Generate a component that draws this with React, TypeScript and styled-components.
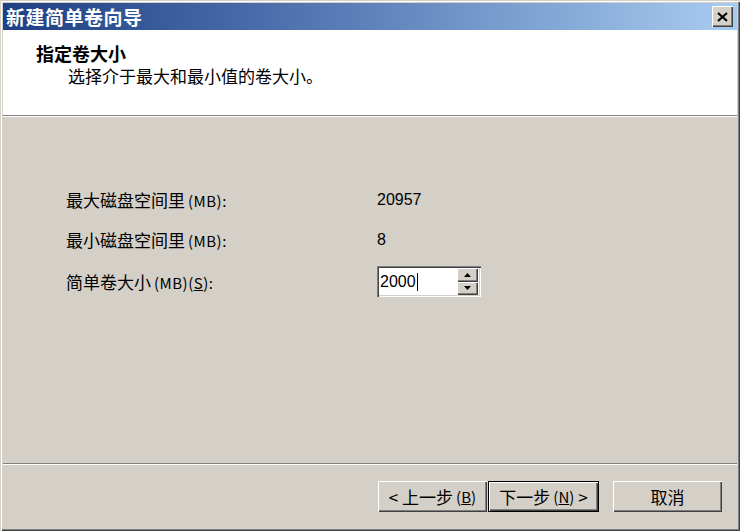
import React from "react";
import styled, { createGlobalStyle } from "styled-components";

const Global = createGlobalStyle`
  html, body { margin: 0; padding: 0; background: #d4d0c8; }
  body { font-family: "Noto Sans CJK SC", "Liberation Sans", sans-serif; }
`;

const CJK = `"Noto Sans CJK SC", "Liberation Sans", sans-serif`;

const Window = styled.div`
  width: 740px;
  height: 531px;
  box-sizing: border-box;
  padding: 3px;
  background: #d4d0c8;
  box-shadow: inset 1px 1px #d4d0c8, inset 2px 2px #ffffff,
    inset -1px -1px #404040, inset -2px -2px #808080;
  display: flex;
  flex-direction: column;
`;

const TitleBar = styled.div`
  height: 27px;
  flex: none;
  display: flex;
  align-items: center;
  justify-content: space-between;
  padding: 0 4px 0 3px;
  background: linear-gradient(to right, #1e3f82 0%, #4f74b0 40%, #a8ccf0 100%);
`;

const TitleText = styled.span`
  color: #fff;
  font-family: ${CJK};
  font-weight: 700;
  font-size: 19px;
  line-height: 27px;
  letter-spacing: 0.5px;
`;

const CloseButton = styled.div`
  width: 21px;
  height: 21px;
  box-sizing: border-box;
  background: #d4d0c8;
  box-shadow: inset 1px 1px #ffffff, inset -1px -1px #404040,
    inset -2px -2px #808080;
  display: flex;
  align-items: center;
  justify-content: center;
`;

const Header = styled.div`
  height: 85px;
  flex: none;
  background: #ffffff;
  padding: 11px 0 0 33px;
  box-sizing: border-box;
`;

const HeaderTitle = styled.div`
  font-family: ${CJK};
  font-weight: 700;
  font-size: 18px;
  line-height: 24px;
  color: #000;
`;

const HeaderSub = styled.div`
  font-family: ${CJK};
  font-size: 17px;
  line-height: 22px;
  color: #000;
  padding-left: 32px;
`;

const Etched = styled.div`
  height: 2px;
  flex: none;
  border-top: 1px solid #808080;
  border-bottom: 1px solid #ffffff;
  box-sizing: border-box;
`;

const Body = styled.div`
  flex: 1;
  padding: 63px 0 0 63px;
  box-sizing: border-box;
`;

const FormGrid = styled.div`
  display: grid;
  grid-template-columns: 311px auto;
  grid-auto-rows: 40px;
  align-items: center;
`;

const LabelRow = styled.div<{ $tall?: boolean }>`
  font-family: ${CJK};
  font-size: 17px;
  color: #000;
  line-height: 24px;
  ${(p) => (p.$tall ? "margin-top: 4px;" : "")}
`;

const Mb = styled.span`
  font-size: 15px;
  letter-spacing: 0.5px;
  margin-left: 3px;
`;

const Value = styled.div`
  font-family: "Liberation Sans", sans-serif;
  font-size: 16px;
  color: #000;
`;

const SpinBox = styled.div`
  margin-top: 3px;
  width: 104px;
  height: 31px;
  box-sizing: border-box;
  background: #fff;
  box-shadow: inset 1px 1px #808080, inset 2px 2px #404040,
    inset -1px -1px #ffffff, inset -2px -2px #d4d0c8;
  display: flex;
  align-items: center;
  padding: 2px 2px 2px 3px;
`;

const SpinText = styled.div`
  flex: 1;
  font-family: "Liberation Sans", sans-serif;
  font-size: 16px;
  color: #000;
  display: flex;
  align-items: center;
`;

const Caret = styled.span`
  display: inline-block;
  width: 1px;
  height: 18px;
  background: #000;
  margin-left: 1px;
`;

const SpinButtons = styled.div`
  width: 21px;
  height: 27px;
  display: flex;
  flex-direction: column;
  margin-right: 1px;
`;

const SpinBtn = styled.div`
  flex: 1;
  background: #d4d0c8;
  box-shadow: inset 1px 1px #ffffff, inset -1px -1px #404040,
    inset -2px -2px #808080;
  display: flex;
  align-items: center;
  justify-content: center;
`;

const Footer = styled.div`
  height: 63px;
  flex: none;
  display: flex;
  justify-content: flex-end;
  align-items: flex-start;
  padding: 16px 15px 0 0;
  box-sizing: border-box;
`;

const Button = styled.div<{ $default?: boolean; $gap?: number }>`
  width: ${(p) => (p.$default ? 111 : 109)}px;
  height: 31px;
  box-sizing: border-box;
  margin-left: ${(p) => p.$gap ?? 0}px;
  background: #d4d0c8;
  font-family: ${CJK};
  font-size: 17px;
  color: #000;
  display: flex;
  align-items: center;
  justify-content: center;
  ${(p) =>
    p.$default
      ? `border: 1px solid #000; box-shadow: inset 1px 1px #ffffff, inset -1px -1px #404040, inset -2px -2px #808080;`
      : `box-shadow: inset 1px 1px #ffffff, inset -1px -1px #404040, inset -2px -2px #808080;`}
`;

const Key = styled.span`
  font-size: 15px;
  margin-left: 3px;
`;

const U = styled.span`
  text-decoration: underline;
`;

const Arrow = ({ up }: { up?: boolean }) => (
  <svg width="7" height="4" viewBox="0 0 7 4">
    <polygon points={up ? "3.5,0 7,4 0,4" : "0,0 7,0 3.5,4"} fill="#000" />
  </svg>
);

export default function App() {
  return (
    <>
      <Global />
      <Window>
        <TitleBar>
          <TitleText>新建简单卷向导</TitleText>
          <CloseButton>
            <svg width="11" height="10" viewBox="0 0 11 10">
              <path d="M1 1 L10 9 M10 1 L1 9" stroke="#000" strokeWidth="2.2" />
            </svg>
          </CloseButton>
        </TitleBar>
        <Header>
          <HeaderTitle>指定卷大小</HeaderTitle>
          <HeaderSub>选择介于最大和最小值的卷大小。</HeaderSub>
        </Header>
        <Etched />
        <Body>
          <FormGrid>
            <LabelRow>
              最大磁盘空间里<Mb>(MB):</Mb>
            </LabelRow>
            <Value>20957</Value>
            <LabelRow>
              最小磁盘空间里<Mb>(MB):</Mb>
            </LabelRow>
            <Value>8</Value>
            <LabelRow $tall>
              简单卷大小<Mb>
                (MB)(<U>S</U>):
              </Mb>
            </LabelRow>
            <SpinBox>
              <SpinText>
                2000
                <Caret />
              </SpinText>
              <SpinButtons>
                <SpinBtn>
                  <Arrow up />
                </SpinBtn>
                <SpinBtn>
                  <Arrow />
                </SpinBtn>
              </SpinButtons>
            </SpinBox>
          </FormGrid>
        </Body>
        <Etched />
        <Footer>
          <Button>
            &lt;&nbsp;上一步<Key>
              (<U>B</U>)
            </Key>
          </Button>
          <Button $default $gap={1}>
            下一步<Key>
              (<U>N</U>)
            </Key>
            &nbsp;&gt;
          </Button>
          <Button $gap={14}>取消</Button>
        </Footer>
      </Window>
    </>
  );
}
